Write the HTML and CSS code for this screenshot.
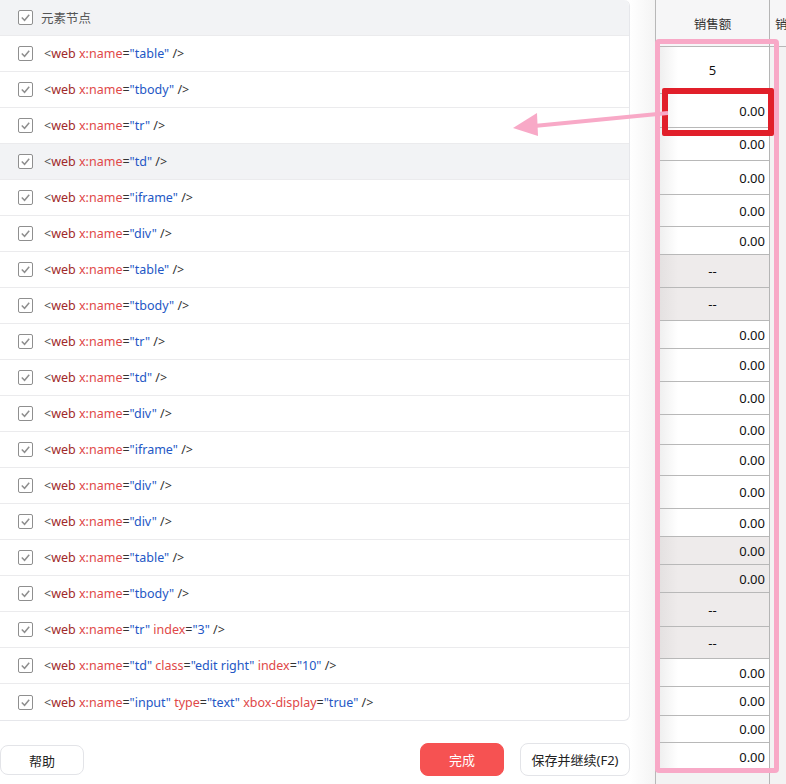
FILE: index.html
```html
<!DOCTYPE html>
<html lang="zh-CN">
<head>
    <meta charset="UTF-8">
    <title>元素节点</title>
    <link rel="stylesheet" href="styles.css">
</head>
<body>
    <div class="page">
        <div class="left">
            <div class="panel">
                <div class="row head"><span class="cb"><svg viewBox="0 0 14 14"><polyline points="3,7 6,10 11,4"/></svg></span><span class="title">元素节点</span></div>
                <div class="row"><span class="cb"><svg viewBox="0 0 14 14"><polyline points="3,7 6,10 11,4"/></svg></span><span class="code"><i>&lt;</i><b>web</b> <em>x:name</em>=<u>"table"</u> /&gt;</span></div>
                <div class="row"><span class="cb"><svg viewBox="0 0 14 14"><polyline points="3,7 6,10 11,4"/></svg></span><span class="code"><i>&lt;</i><b>web</b> <em>x:name</em>=<u>"tbody"</u> /&gt;</span></div>
                <div class="row"><span class="cb"><svg viewBox="0 0 14 14"><polyline points="3,7 6,10 11,4"/></svg></span><span class="code"><i>&lt;</i><b>web</b> <em>x:name</em>=<u>"tr"</u> /&gt;</span></div>
                <div class="row hover"><span class="cb"><svg viewBox="0 0 14 14"><polyline points="3,7 6,10 11,4"/></svg></span><span class="code"><i>&lt;</i><b>web</b> <em>x:name</em>=<u>"td"</u> /&gt;</span></div>
                <div class="row"><span class="cb"><svg viewBox="0 0 14 14"><polyline points="3,7 6,10 11,4"/></svg></span><span class="code"><i>&lt;</i><b>web</b> <em>x:name</em>=<u>"iframe"</u> /&gt;</span></div>
                <div class="row"><span class="cb"><svg viewBox="0 0 14 14"><polyline points="3,7 6,10 11,4"/></svg></span><span class="code"><i>&lt;</i><b>web</b> <em>x:name</em>=<u>"div"</u> /&gt;</span></div>
                <div class="row"><span class="cb"><svg viewBox="0 0 14 14"><polyline points="3,7 6,10 11,4"/></svg></span><span class="code"><i>&lt;</i><b>web</b> <em>x:name</em>=<u>"table"</u> /&gt;</span></div>
                <div class="row"><span class="cb"><svg viewBox="0 0 14 14"><polyline points="3,7 6,10 11,4"/></svg></span><span class="code"><i>&lt;</i><b>web</b> <em>x:name</em>=<u>"tbody"</u> /&gt;</span></div>
                <div class="row"><span class="cb"><svg viewBox="0 0 14 14"><polyline points="3,7 6,10 11,4"/></svg></span><span class="code"><i>&lt;</i><b>web</b> <em>x:name</em>=<u>"tr"</u> /&gt;</span></div>
                <div class="row"><span class="cb"><svg viewBox="0 0 14 14"><polyline points="3,7 6,10 11,4"/></svg></span><span class="code"><i>&lt;</i><b>web</b> <em>x:name</em>=<u>"td"</u> /&gt;</span></div>
                <div class="row"><span class="cb"><svg viewBox="0 0 14 14"><polyline points="3,7 6,10 11,4"/></svg></span><span class="code"><i>&lt;</i><b>web</b> <em>x:name</em>=<u>"div"</u> /&gt;</span></div>
                <div class="row"><span class="cb"><svg viewBox="0 0 14 14"><polyline points="3,7 6,10 11,4"/></svg></span><span class="code"><i>&lt;</i><b>web</b> <em>x:name</em>=<u>"iframe"</u> /&gt;</span></div>
                <div class="row"><span class="cb"><svg viewBox="0 0 14 14"><polyline points="3,7 6,10 11,4"/></svg></span><span class="code"><i>&lt;</i><b>web</b> <em>x:name</em>=<u>"div"</u> /&gt;</span></div>
                <div class="row"><span class="cb"><svg viewBox="0 0 14 14"><polyline points="3,7 6,10 11,4"/></svg></span><span class="code"><i>&lt;</i><b>web</b> <em>x:name</em>=<u>"div"</u> /&gt;</span></div>
                <div class="row"><span class="cb"><svg viewBox="0 0 14 14"><polyline points="3,7 6,10 11,4"/></svg></span><span class="code"><i>&lt;</i><b>web</b> <em>x:name</em>=<u>"table"</u> /&gt;</span></div>
                <div class="row"><span class="cb"><svg viewBox="0 0 14 14"><polyline points="3,7 6,10 11,4"/></svg></span><span class="code"><i>&lt;</i><b>web</b> <em>x:name</em>=<u>"tbody"</u> /&gt;</span></div>
                <div class="row"><span class="cb"><svg viewBox="0 0 14 14"><polyline points="3,7 6,10 11,4"/></svg></span><span class="code"><i>&lt;</i><b>web</b> <em>x:name</em>=<u>"tr"</u> <em>index</em>=<u>"3"</u> /&gt;</span></div>
                <div class="row"><span class="cb"><svg viewBox="0 0 14 14"><polyline points="3,7 6,10 11,4"/></svg></span><span class="code"><i>&lt;</i><b>web</b> <em>x:name</em>=<u>"td"</u> <em>class</em>=<u>"edit right"</u> <em>index</em>=<u>"10"</u> /&gt;</span></div>
                <div class="row"><span class="cb"><svg viewBox="0 0 14 14"><polyline points="3,7 6,10 11,4"/></svg></span><span class="code"><i>&lt;</i><b>web</b> <em>x:name</em>=<u>"input"</u> <em>type</em>=<u>"text"</u> <em>xbox-display</em>=<u>"true"</u> /&gt;</span></div>
            </div>
            <div class="footer">
                <button class="btn help">帮助</button>
                <button class="btn primary">完成</button>
                <button class="btn save">保存并继续(F2)</button>
            </div>
        </div>

        <div class="right">
            <div class="gutter"></div>
            <div class="col">
                <div class="cell th" style="height:47px">销售额</div>
                <div class="cell mid" style="height:47px">5</div>
                <div class="cell" style="height:34px">0.00</div>
                <div class="cell" style="height:33px">0.00</div>
                <div class="cell" style="height:34px">0.00</div>
                <div class="cell" style="height:32px">0.00</div>
                <div class="cell" style="height:28px">0.00</div>
                <div class="cell mid grey" style="height:33px">--</div>
                <div class="cell mid grey" style="height:33px">--</div>
                <div class="cell" style="height:28px">0.00</div>
                <div class="cell" style="height:33px">0.00</div>
                <div class="cell" style="height:33px">0.00</div>
                <div class="cell" style="height:30px">0.00</div>
                <div class="cell" style="height:31px">0.00</div>
                <div class="cell" style="height:33px">0.00</div>
                <div class="cell" style="height:28px">0.00</div>
                <div class="cell grey" style="height:28px">0.00</div>
                <div class="cell grey" style="height:28px">0.00</div>
                <div class="cell mid grey" style="height:34px">--</div>
                <div class="cell mid grey" style="height:32px">--</div>
                <div class="cell" style="height:28px">0.00</div>
                <div class="cell" style="height:29px">0.00</div>
                <div class="cell" style="height:27px">0.00</div>
                <div class="cell" style="height:28px">0.00</div>
            </div>
            <div class="col next">
                <div class="cell th" style="height:47px">销</div>
            </div>
            <div class="pink-box"></div>
            <div class="red-box"></div>
        </div>

        <svg class="arrow" viewBox="0 0 170 40" width="170" height="40">
            <line x1="158" y1="13" x2="24" y2="26"/>
            <polygon points="3,28 27,13 28,36"/>
        </svg>
    </div>
</body>
</html>
```

FILE: styles.css
```css
* {
    box-sizing: border-box;
}

body {
    margin: 0;
    background: #ffffff;
    font-family: "Noto Sans", "Noto Sans CJK SC", sans-serif;
    color: #333;
    overflow: hidden;
}

.page {
    position: relative;
    display: flex;
    width: 786px;
    height: 784px;
}

.left {
    flex: none;
    width: 630px;
    display: flex;
    flex-direction: column;
}

.panel {
    height: 721px;
    border: 1px solid #e6e7eb;
    border-left: none;
    border-top: none;
    border-radius: 0 6px 6px 0;
    overflow: hidden;
}

.row {
    height: 36px;
    display: flex;
    align-items: center;
    padding-left: 18px;
    border-bottom: 1px solid #ebebed;
    font-size: 12.5px;
}

.row:last-child {
    border-bottom: none;
}

.row.head {
    background: #f2f3f5;
}

.row.hover {
    background: #f2f3f5;
}

.cb {
    width: 15px;
    height: 15px;
    border: 1px solid #8f8f8f;
    border-radius: 2px;
    background: #fff;
    display: flex;
}

.cb svg {
    width: 13px;
    height: 13px;
    fill: none;
    stroke: #8f8f8f;
    stroke-width: 1.6;
}

.title {
    margin-left: 8px;
    color: #555;
    font-size: 12.5px;
}

.code {
    margin-left: 11px;
    color: #333;
    white-space: pre;
}

.code i {
    font-style: normal;
    color: #555;
}

.code b {
    font-weight: normal;
    color: #a12a2a;
}

.code em {
    font-style: normal;
    color: #e04848;
}

.code u {
    text-decoration: none;
    color: #2457c5;
}

.footer {
    flex: 1;
    display: flex;
    align-items: flex-start;
    padding-top: 22px;
}

.btn {
    height: 33px;
    border: 1px solid #e3e4e8;
    border-radius: 8px;
    background: #fff;
    font-family: "Noto Sans", "Noto Sans CJK SC", sans-serif;
    font-size: 13px;
    color: #222;
    cursor: pointer;
}

.help {
    width: 84px;
    height: 30px;
    margin-top: 2px;
}

.primary {
    width: 84px;
    margin-left: auto;
    background: #f65252;
    border-color: #f65252;
    color: #fff;
}

.save {
    width: 110px;
    margin-left: 16px;
}

.right {
    position: relative;
    flex: none;
    width: 156px;
    display: flex;
    background: #fff;
}

.gutter {
    width: 26px;
    background: linear-gradient(to right, #ffffff, #f4f4f4);
    border-right: 1px solid #b8b8b8;
}

.col {
    width: 114px;
    border-right: 1px solid #b5b5b5;
    background: #f3f3f3;
}

.col.next {
    flex: 1;
    border-right: none;
    overflow: hidden;
}

.cell {
    display: flex;
    align-items: center;
    justify-content: flex-end;
    padding-right: 4px;
    border-bottom: 1px solid #b8b8b8;
    background: linear-gradient(to right, #ececec, #ffffff 22px);
    font-size: 13px;
    color: #111;
}

.cell.mid {
    justify-content: center;
    padding-right: 0;
}

.cell.th {
    justify-content: center;
    padding: 0;
    background: #f6f6f7;
    color: #333;
    font-size: 12.5px;
}

.col.next .cell.th {
    justify-content: flex-start;
    padding-left: 5px;
    white-space: nowrap;
}

.cell.grey {
    background: linear-gradient(to right, #e2dfdf, #eeebeb 22px);
}

.pink-box {
    position: absolute;
    left: 25px;
    top: 39px;
    width: 124px;
    height: 734px;
    border: 5px solid #f8a9c7;
    border-radius: 4px;
}

.red-box {
    position: absolute;
    left: 32px;
    top: 88px;
    width: 112px;
    height: 48px;
    border: 6px solid #e11f2a;
    border-radius: 2px;
}

.arrow {
    position: absolute;
    left: 510px;
    top: 100px;
}

.arrow line {
    stroke: #f8a9c7;
    stroke-width: 4;
}

.arrow polygon {
    fill: #f8a9c7;
}
```
